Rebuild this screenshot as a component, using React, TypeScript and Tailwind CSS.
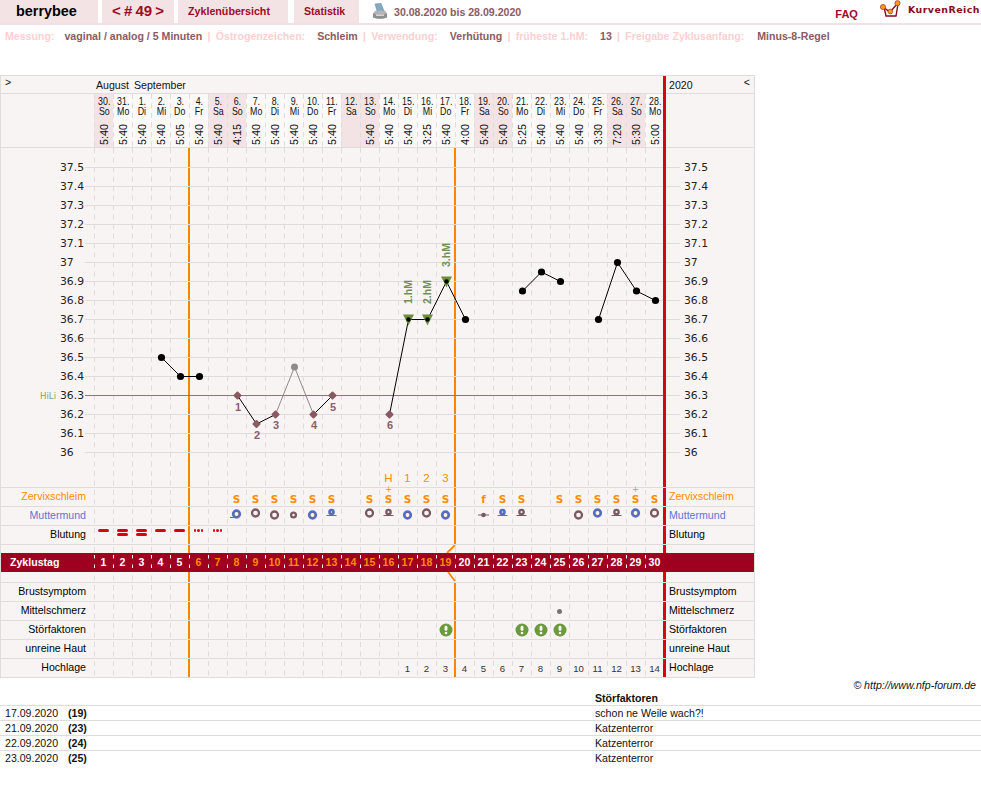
import type { ReactNode } from 'react'

const days = [
  ['30.', 'So', '5:40'], ['31.', 'Mo', '5:40'], ['1.', 'Di', '5:40'], ['2.', 'Mi', '5:40'], ['3.', 'Do', '5:05'],
  ['4.', 'Fr', '5:40'], ['5.', 'Sa', '5:40'], ['6.', 'So', '4:15'], ['7.', 'Mo', '5:40'], ['8.', 'Di', '5:40'],
  ['9.', 'Mi', '5:40'], ['10.', 'Do', '5:40'], ['11.', 'Fr', '5:40'], ['12.', 'Sa', ''], ['13.', 'So', '5:40'],
  ['14.', 'Mo', '5:40'], ['15.', 'Di', '5:40'], ['16.', 'Mi', '3:25'], ['17.', 'Do', '5:40'], ['18.', 'Fr', '4:00'],
  ['19.', 'Sa', '5:40'], ['20.', 'So', '5:40'], ['21.', 'Mo', '5:25'], ['22.', 'Di', '5:40'], ['23.', 'Mi', '5:40'],
  ['24.', 'Do', '5:40'], ['25.', 'Fr', '3:30'], ['26.', 'Sa', '7:20'], ['27.', 'So', '5:30'], ['28.', 'Mo', '5:00'],
]

const scale = ['37.5', '37.4', '37.3', '37.2', '37.1', '37', '36.9', '36.8', '36.7', '36.6', '36.5', '36.4', '36.3', '36.2', '36.1', '36']

const info = [
  { label: 'Messung:', value: 'vaginal / analog / 5 Minuten', gap: 'ml-[10px]' },
  { label: 'Östrogenzeichen:', value: 'Schleim', gap: 'ml-[12px]' },
  { label: 'Verwendung:', value: 'Verhütung', gap: 'ml-[12px]' },
  { label: 'früheste 1.hM:', value: '13', gap: 'ml-[12px]' },
  { label: 'Freigabe Zyklusanfang:', value: 'Minus-8-Regel', gap: 'ml-[13px]' },
]

const notes = [
  ['17.09.2020', '(19)', 'schon ne Weile wach?!'],
  ['21.09.2020', '(23)', 'Katzenterror'],
  ['22.09.2020', '(24)', 'Katzenterror'],
  ['23.09.2020', '(25)', 'Katzenterror'],
]

const BLUE = '#4f70d0'
const BROWN = '#7b5a60'

// [day index, colour, ring radius, centre y, line under it]
const cervix: [number, string, number, number, string?][] = [
  [7, BLUE, 3.5, 7, 'tail'], [8, BROWN, 3.5, 6], [9, BROWN, 3.5, 8], [10, BROWN, 2.4, 8], [11, BLUE, 3.5, 8],
  [12, BLUE, 2.2, 5, 'line'], [14, BROWN, 3.5, 6], [15, BROWN, 2.2, 5, 'line'], [16, BLUE, 3.5, 8], [17, BROWN, 3.5, 6],
  [18, BLUE, 3.5, 8], [20, BROWN, 1.2, 8, 'through'], [21, BLUE, 2.2, 5, 'line'], [22, BROWN, 2.2, 5, 'line'],
  [25, BROWN, 3.5, 8], [26, BLUE, 3.5, 6], [27, BROWN, 2.2, 5, 'line'], [28, BLUE, 3.5, 6], [29, BROWN, 3.5, 6],
]

const mucus: Record<number, string> = {
  7: 'S', 8: 'S', 9: 'S', 10: 'S', 11: 'S', 12: 'S', 14: 'S', 15: 'S', 16: 'S', 17: 'S', 18: 'S',
  20: 'f', 21: 'S', 22: 'S', 24: 'S', 25: 'S', 26: 'S', 27: 'S', 28: 'S', 29: 'S',
}

const px = (i: number) => 10.5 + 19 * i
const py = (t: number) => 19.5 + (37.5 - t) * 190

const blackRuns: [number, number][][] = [
  [[3, 36.5], [4, 36.4], [5, 36.4]],
  [[7, 36.3], [8, 36.15], [9, 36.2]],
  [[11, 36.2], [12, 36.3]],
  [[15, 36.2], [16, 36.7], [17, 36.7], [18, 36.9], [19, 36.7]],
  [[22, 36.85], [23, 36.95], [24, 36.9]],
  [[26, 36.7], [27, 37], [28, 36.85], [29, 36.8]],
]

const solid = [[3, 36.5], [4, 36.4], [5, 36.4], [19, 36.7], [22, 36.85], [23, 36.95], [24, 36.9], [26, 36.7], [27, 37], [28, 36.85], [29, 36.8]]
const excluded = [[7, 36.3], [8, 36.15], [9, 36.2], [11, 36.2], [12, 36.3], [15, 36.2]]
const rise = [[16, 36.7], [17, 36.7], [18, 36.9]]

const excludedNums: [string, number, number][] = [
  ['1', 144, 263], ['2', 163, 291], ['3', 182, 281], ['4', 220, 281], ['5', 239, 263], ['6', 296, 281],
]

function Dashes({ stroke = '#dedcdc', dash = '5 4.5', offset = 0 }: { stroke?: string; dash?: string; offset?: number }) {
  return (
    <svg className="pointer-events-none absolute left-[93px] top-0 h-full w-[570px]">
      {days.map((_, i) => (
        <line key={i} x1={19 * i + 0.5} x2={19 * i + 0.5} y1="0" y2="100%" stroke={stroke} strokeDasharray={dash} strokeDashoffset={offset} />
      ))}
    </svg>
  )
}

function Bars({ second = true }: { second?: boolean }) {
  return (
    <>
      <div className="absolute bottom-0 left-[187px] top-0 w-[2px] bg-[#ff8400]" />
      {second && <div className="absolute bottom-0 left-[453px] top-0 w-[2px] bg-[#ff8400]" />}
      <div className="absolute bottom-0 left-[662px] top-0 w-[3px] bg-[#dc0010]" />
    </>
  )
}

function Cells({ items }: { items: Record<number, ReactNode> }) {
  return (
    <div className="flex w-[570px]">
      {days.map((_, i) => (
        <div key={i} className="flex h-full w-[19px] items-center justify-center">
          {items[i]}
        </div>
      ))}
    </div>
  )
}

function Row({ label, tone = 'text-black', items = {} }: { label: string; tone?: string; items?: Record<number, ReactNode> }) {
  return (
    <div className="relative flex h-[19px] border-b border-[#dedcdc] leading-[17px]">
      <div className={`w-[93px] pr-[8px] text-right ${tone}`}>{label}</div>
      <Cells items={items} />
      <div className={`pl-[5px] ${tone}`}>{label}</div>
      <Bars />
    </div>
  )
}

function Ring({ color, r, cy, line }: { color: string; r: number; cy: number; line?: string }) {
  return (
    <svg width="19" height="18" viewBox="0 0 19 18">
      {line === 'line' && <line x1="4.5" x2="14.5" y1={cy + 3.5} y2={cy + 3.5} stroke={color} />}
      {line === 'tail' && <line x1="3" x2="7" y1={cy + 3.5} y2={cy + 3.5} stroke={color} />}
      {line === 'through' && <line x1="4" x2="15" y1={cy} y2={cy} stroke={color} />}
      <circle cx="9.5" cy={cy} r={r} fill="none" stroke={color} strokeWidth="2.3" />
      {color === BLUE && <circle cx="9.5" cy={cy} r={r - 1} fill="none" stroke={BROWN} strokeWidth="0.8" />}
    </svg>
  )
}

function Mucus({ text, plus }: { text: string; plus?: boolean }) {
  return (
    <div className="relative flex h-full items-end justify-center pb-[2px] font-['DejaVu_Sans',sans-serif] text-[10.5px] font-semibold leading-[9px] text-[#ff8c00]">
      {plus && <span className="absolute top-[-2px] text-[8px] font-normal leading-[8px]">+</span>}
      {text}
    </div>
  )
}

function Warn() {
  return (
    <svg width="14" height="14" viewBox="0 0 14 14">
      <circle cx="7" cy="7" r="6.5" fill="#6a9a3c" />
      <rect x="5.6" y="2.8" width="2.8" height="5" rx="1.4" fill="#fff" />
      <circle cx="7" cy="10" r="1.3" fill="#fff" />
    </svg>
  )
}

function Bleed({ kind }: { kind: 'one' | 'two' | 'dots' }) {
  return (
    <div className="flex h-full flex-col items-center justify-start pt-[3px]">
      {kind === 'dots' ? (
        <div className="flex gap-[1px]">
          <span className="size-[2.6px] rounded-full bg-[#d80010]" />
          <span className="size-[2.6px] rounded-full bg-[#d80010]" />
          <span className="size-[2.6px] rounded-full bg-[#d80010]" />
        </div>
      ) : (
        <>
          <span className="h-[3px] w-[11px] rounded-full bg-[#d80010]" />
          {kind === 'two' && <span className="mt-[1px] h-[3px] w-[11px] rounded-full bg-[#d80010]" />}
        </>
      )}
    </div>
  )
}

function Printer() {
  return (
    <svg width="16" height="17" viewBox="0 0 16 17">
      <path d="M3 1 L9 0.5 L12 8 L5 8 Z" fill="#86a9c4" stroke="#6f8ca3" strokeWidth="0.6" />
      <path d="M1 10 L4 7.5 L12.5 7.5 L15 10 L15 14.5 Q8 17 1 14.5 Z" fill="#b4b4b4" />
      <path d="M1 10.5 Q8 13 15 10.5 L15 14.5 Q8 17 1 14.5 Z" fill="#8f8f8f" />
      <rect x="4" y="11.5" width="8" height="1.4" fill="#dcdcdc" />
    </svg>
  )
}

function Logo() {
  return (
    <svg width="21" height="20" viewBox="0 0 21 20">
      <path d="M4 7 L6 16 L16 16 L18 4" fill="none" stroke="#8b0a1e" strokeWidth="1.4" />
      <path d="M3 7 L10 12 L18 3" fill="none" stroke="#8b0a1e" strokeWidth="1.4" />
      <circle cx="3" cy="7" r="2.6" fill="#f59a1e" stroke="#a8341c" strokeWidth="0.7" />
      <circle cx="10.3" cy="11.5" r="2.4" fill="#f59a1e" stroke="#a8341c" strokeWidth="0.7" />
      <circle cx="17.5" cy="3.2" r="2.6" fill="#f59a1e" stroke="#a8341c" strokeWidth="0.7" />
    </svg>
  )
}

function TopBar() {
  return (
    <div className="flex h-[25px] border-b-2 border-[#f3e0e2]">
      <div className="flex w-[98px] items-center bg-[#f3e3e5] pl-[16px] text-[14.4px] font-bold text-black">berrybee</div>
      <div className="ml-[4px] flex w-[72px] items-center justify-center bg-[#f3e3e5] text-[15px] font-bold text-[#a00a28] [word-spacing:-1px]">&lt; # 49 &gt;</div>
      <div className="ml-[4px] flex w-[110px] items-center bg-[#f3e3e5] pl-[10px] text-[10.7px] font-bold text-[#a00a28]">Zyklenübersicht</div>
      <div className="ml-[6px] flex w-[65px] items-center bg-[#f3e3e5] pl-[10px] text-[10.6px] font-bold text-[#a00a28]">Statistik</div>
      <div className="ml-[13px] mt-[3px]"><Printer /></div>
      <div className="ml-[6px] mt-[6px] text-[10.6px] font-bold leading-[12px] text-[#8c5a62]">30.08.2020 bis 28.09.2020</div>
      <div className="ml-auto mt-[8px] text-[11px] font-bold leading-[13px] text-[#a00a28]">FAQ</div>
      <div className="ml-[22px]"><Logo /></div>
      <div className="ml-[7px] mr-[1px] mt-[4px] font-['DejaVu_Sans',sans-serif] text-[9.4px] font-bold leading-[12px] tracking-[0.5px] text-[#8b0a1e]">KurvenReich</div>
    </div>
  )
}

function InfoLine() {
  return (
    <div className="flex h-[50px] pl-[5px] pt-[5px] text-[10.6px] font-bold leading-[12px]">
      {info.map((item, i) => (
        <div key={item.label} className="flex">
          {i > 0 && <span className="mx-[5.25px] text-[#fbd0d2]">|</span>}
          <span className="text-[#fbd0d2]">{item.label}</span>
          <span className={`${item.gap} text-[#8c5a62]`}>{item.value}</span>
        </div>
      ))}
    </div>
  )
}

function ChartHeader() {
  return (
    <>
      <div className="relative flex h-[18px] border-b border-[#dedcdc] leading-[18px]">
        <div className="w-[93px] pl-[4px] leading-[13px]">&gt;</div>
        <div className="flex w-[570px] gap-[5px] pl-[2px]">
          <span>August</span>
          <span>September</span>
        </div>
        <div className="flex flex-1 pl-[5px] pr-[4px]">
          <span>2020</span>
          <span className="ml-auto leading-[13px]">&lt;</span>
        </div>
        <div className="absolute bottom-[-1px] left-[662px] top-0 w-[3px] bg-[#dc0010]" />
      </div>
      <div className="relative flex h-[54px] border-b border-[#dedcdc]">
        <div className="w-[93px]" />
        <div className="flex w-[570px]">
          {days.map(([date, name, time]) => (
            <div
              key={date + name}
              className={`flex h-[53px] w-[19px] flex-col items-center pl-[1px] pt-[3px] leading-[10px] ${
                name === 'Sa' || name === 'So' ? 'bg-[#f3e3e5]' : 'bg-[#fbf8f8]'
              }`}
            >
              <span className="scale-x-[0.85] whitespace-nowrap text-[10.4px]">{date}</span>
              <span className="scale-x-[0.85] whitespace-nowrap text-[10.4px]">{name}</span>
              <span className="mb-[2px] mt-auto rotate-180 text-[10.8px] leading-[11px] [writing-mode:vertical-rl]">{time}</span>
            </div>
          ))}
        </div>
        <Dashes />
        <div className="absolute bottom-[-1px] left-[662px] top-0 w-[3px] bg-[#dc0010]" />
      </div>
    </>
  )
}

function Curve() {
  return (
    <svg className="pointer-events-none absolute left-[93px] top-0 font-['Liberation_Sans',sans-serif]" width="580" height="339" viewBox="0 0 580 339">
      {blackRuns.map((run, i) => (
        <polyline key={i} points={run.map(([d, t]) => `${px(d)},${py(t)}`).join(' ')} fill="none" stroke="#000" />
      ))}
      <polyline
        points={`${px(9)},${py(36.2)} ${px(10)},${py(36.45)} ${px(11)},${py(36.2)}`}
        fill="none"
        stroke="#8c8c8c"
      />
      <circle cx={px(10)} cy={py(36.45)} r="3.5" fill="#8c8c8c" />
      {solid.map(([d, t]) => (
        <circle key={d} cx={px(d)} cy={py(t)} r="3.6" fill="#000" />
      ))}
      {excluded.map(([d, t]) => (
        <path
          key={d}
          d={`M${px(d)} ${py(t) - 3} L${px(d) + 3} ${py(t)} L${px(d)} ${py(t) + 3} L${px(d) - 3} ${py(t)} Z`}
          fill="#8a5a62"
          stroke="#8a5a62"
          strokeWidth="2"
          strokeLinejoin="round"
        />
      ))}
      {rise.map(([d, t]) => (
        <g key={d}>
          <path d={`M${px(d) - 5.5} ${py(t) - 5} L${px(d) + 5.5} ${py(t) - 5} L${px(d)} ${py(t) + 6} Z`} fill="#6a9038" />
          <circle cx={px(d)} cy={py(t)} r="2.2" fill="#000" />
        </g>
      ))}
      {excludedNums.map(([n, x, y]) => (
        <text key={n} x={x} y={y} textAnchor="middle" fill="#8a5f67" className="text-[11px] font-bold">
          {n}
        </text>
      ))}
      <text transform="rotate(-90 318 144)" x="318" y="144" textAnchor="middle" fill="#6f9050" className="text-[10.5px] font-bold">1.hM</text>
      <text transform="rotate(-90 337 144)" x="337" y="144" textAnchor="middle" fill="#6f9050" className="text-[10.5px] font-bold">2.hM</text>
      <text transform="rotate(-90 356 107)" x="356" y="107" textAnchor="middle" fill="#6f9050" className="text-[10.5px] font-bold">3.hM</text>
    </svg>
  )
}

function ChartBody() {
  return (
    <div className="relative h-[340px] border-b border-[#dedcdc] pt-[10px] font-['DejaVu_Sans',sans-serif] text-[10.8px]">
      <Bars />
      {scale.map(v => (
        <div key={v} className="relative flex h-[19px] items-center">
          {v === '36.3' ? (
            <span className="absolute left-[39px] pt-[2px] text-[8.6px] text-[#7f9f6c]">HiLi</span>
          ) : null}
          <span className="w-[84px] pl-[59px] pt-[2px] text-[#222]">{v}</span>
          <span className={`h-px w-[578px] ${v === '36.3' ? 'bg-[#6b8e4e]' : 'bg-[#dedcdc]'}`} />
          <span className="w-[3px]" />
          <span className="h-px w-[14px] bg-[#dedcdc]" />
          <span className="pl-[4px] pt-[2px] text-[#222]">{v}</span>
        </div>
      ))}
      <div className="ml-[93px] mt-[8px] flex h-[17px] w-[570px] items-center font-['Liberation_Sans',sans-serif] text-[11.5px] text-[#ff8c00]">
        <Cells items={{ 15: 'H', 16: '1', 17: '2', 18: '3' }} />
      </div>
      <Curve />
    </div>
  )
}

function Kink({ up }: { up: boolean }) {
  return (
    <svg className="absolute left-[444px] top-0" width="12" height="10" viewBox="0 0 12 10">
      <line x1={up ? 10 : 3} y1="0" x2={up ? 2 : 10} y2={up ? 8 : 9} stroke="#ff8400" strokeWidth="1.8" />
    </svg>
  )
}

function Band() {
  return (
    <div className="relative z-10 flex h-[19px] bg-[#a00020] text-[10.6px] font-bold leading-[19px] text-white">
      <div className="w-[93px] pl-[9px]">Zyklustag</div>
      <div className="flex w-[570px]">
        {days.map((_, i) => (
          <span key={i} className={`w-[19px] text-center ${i >= 5 && i < 19 ? 'text-[#ff8c00]' : 'text-white'}`}>
            {i + 1}
          </span>
        ))}
      </div>
      <Dashes stroke="#ffffff" dash="3.5 6" offset={-2} />
    </div>
  )
}

function SymptomRows() {
  const blood: Record<number, ReactNode> = {
    0: <Bleed kind="one" />, 1: <Bleed kind="two" />, 2: <Bleed kind="two" />, 3: <Bleed kind="one" />,
    4: <Bleed kind="one" />, 5: <Bleed kind="dots" />, 6: <Bleed kind="dots" />,
  }
  const high: Record<number, ReactNode> = {}
  for (let i = 16; i < 30; i++) {
    high[i] = <span className="text-[9.6px] text-[#333]">{i - 15}</span>
  }
  const mucusItems = Object.fromEntries(
    Object.entries(mucus).map(([k, v]) => [k, <Mucus text={v} plus={k === '15' || k === '28'} />])
  )
  const rings = Object.fromEntries(cervix.map(([i, color, r, cy, line]) => [i, <Ring color={color} r={r} cy={cy} line={line} />]))
  return (
    <>
      <Row label="Zervixschleim" tone="text-[#ff8c00]" items={mucusItems} />
      <Row label="Muttermund" tone="text-[#5b75d5]" items={rings} />
      <Row label="Blutung" items={blood} />
      <div className="relative h-[8px]">
        <Bars second={false} />
        <Kink up />
      </div>
      <Band />
      <div className="relative h-[11px] border-b border-[#dedcdc]">
        <Bars second={false} />
        <Kink up={false} />
      </div>
      <Row label="Brustsymptom" />
      <Row label="Mittelschmerz" items={{ 24: <span className="size-[5px] rounded-full bg-[#777]" /> }} />
      <Row label="Störfaktoren" items={{ 18: <Warn />, 22: <Warn />, 23: <Warn />, 24: <Warn /> }} />
      <Row label="unreine Haut" />
      <Row label="Hochlage" items={high} />
    </>
  )
}

export default function App() {
  return (
    <div className="min-h-[797px] bg-white font-['Liberation_Sans',Arial,sans-serif] text-[10.6px] text-[#111]">
      <TopBar />
      <InfoLine />
      <div className="w-[755px] border-x border-t border-[#dedcdc] bg-[#f9f4f4]">
        <ChartHeader />
        <div className="relative">
          <Dashes />
          <ChartBody />
          <SymptomRows />
        </div>
      </div>
      <div className="flex h-[14px] justify-end pr-[5px] italic leading-[15px]">© http://www.nfp-forum.de</div>
      <div className="flex h-[14px] border-b border-[#dedcdc] pl-[595px] font-bold leading-[13px]">Störfaktoren</div>
      {notes.map(([date, day, text], i) => (
        <div key={date} className={`flex h-[15px] pl-[5px] leading-[15px] ${i < notes.length - 1 ? 'border-b border-[#dedcdc]' : ''}`}>
          <span className="w-[63px]">{date}</span>
          <span className="w-[527px] font-bold">{day}</span>
          <span>{text}</span>
        </div>
      ))}
    </div>
  )
}
